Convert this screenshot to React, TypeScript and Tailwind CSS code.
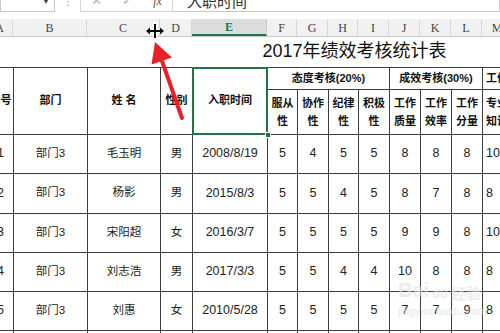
import React from 'react';

const letters = [
  { l: 'A', w: 'w-[26px]' },
  { l: 'B', w: 'w-[74px]' },
  { l: 'C', w: 'w-[73px]' },
  { l: 'D', w: 'w-[32px]' },
  { l: 'E', w: 'w-[75px]' },
  { l: 'F', w: 'w-[30px]' },
  { l: 'G', w: 'w-[31px]' },
  { l: 'H', w: 'w-[30px]' },
  { l: 'I', w: 'w-[31px]' },
  { l: 'J', w: 'w-[31px]' },
  { l: 'K', w: 'w-[31px]' },
  { l: 'L', w: 'w-[31px]' },
  { l: 'M', w: 'w-[31px]' },
];

const rows = [
  ['1', '部门3', '毛玉明', '男', '2008/8/19', '5', '4', '5', '5', '8', '8', '8', '10'],
  ['2', '部门3', '杨影', '男', '2015/8/3', '5', '5', '4', '5', '8', '7', '8', '8'],
  ['3', '部门3', '宋阳超', '女', '2016/3/7', '5', '5', '5', '5', '9', '9', '8', '10'],
  ['4', '部门3', '刘志浩', '男', '2017/3/3', '5', '5', '4', '4', '10', '8', '8', '8'],
  ['5', '部门3', '刘惠', '女', '2010/5/28', '5', '5', '5', '5', '7', '7', '9', '8'],
];

const subHeads: [string, string][] = [
  ['服从', '性'],
  ['协作', '性'],
  ['纪律', '性'],
  ['积极', '性'],
  ['工作', '质量'],
  ['工作', '效率'],
  ['工作', '分量'],
  ['专业', '知识'],
];

const cell = 'border border-[#3c3c3c] text-center align-middle p-0 overflow-hidden whitespace-nowrap';
const head = cell + ' font-bold text-[11px] text-[#111]';

function TopBar() {
  return (
    <div className="h-[12px] overflow-hidden">
      <div className="flex -mt-[10px] h-[22px] items-stretch">
        <div className="w-[55px] border border-[#c8c8c8] relative flex items-center justify-end pr-[4px]">
          <span className="text-[8px] text-[#444] leading-none">▼</span>
        </div>
        <div className="w-[25px] flex items-center justify-center text-[10px] text-[#888]">⋮</div>
        <div className="w-[93px] border border-[#d4d4d4] flex items-center justify-around text-[#b5b5b5] text-[13px]">
          <span>✕</span>
          <span>✓</span>
          <span className="italic font-['Liberation_Serif',serif] text-[12px] text-[#555]">fx</span>
        </div>
        <div className="flex-1 border border-[#c8c8c8] border-l-0 pl-[14px] flex items-center text-[15px] text-[#333] font-['Noto_Sans_CJK_SC',sans-serif]">
          入职时间
        </div>
      </div>
    </div>
  );
}

function LetterRow() {
  return (
    <div className="flex -ml-[13px] h-[18px] bg-[#f1f1f1] border-b border-[#c9c9c9] font-['Liberation_Serif',serif] text-[12px] text-[#444]">
      {letters.map((c) =>
        c.l === 'E' ? (
          <div
            key={c.l}
            className={`${c.w} shrink-0 bg-[#dcdcdc] border-r border-[#c9c9c9] border-b-2 border-b-[#217346] text-center leading-[17px] font-bold text-[#217346]`}
          >
            {c.l}
          </div>
        ) : (
          <div key={c.l} className={`${c.w} shrink-0 border-r border-[#d8d8d8] text-center leading-[18px]`}>
            {c.l}
          </div>
        )
      )}
    </div>
  );
}

function Sheet() {
  return (
    <table className="table-fixed border-collapse -ml-[13px] w-[526px] font-['Liberation_Sans','Noto_Sans_CJK_SC',sans-serif] text-[#222]">
      <colgroup>
        {letters.map((c) => (
          <col key={c.l} className={c.w} />
        ))}
      </colgroup>
      <tbody>
        <tr className="h-[30px]">
          <td colSpan={13} className="p-0 pl-[275px] text-[18px] text-[#111] whitespace-nowrap align-middle">
            2017年绩效考核统计表
          </td>
        </tr>
        <tr className="h-[22px]">
          <td rowSpan={2} className={head}>序号</td>
          <td rowSpan={2} className={head}>部门</td>
          <td rowSpan={2} className={head}>姓 名</td>
          <td rowSpan={2} className={head}>性别</td>
          <td rowSpan={2} className={head + ' relative overflow-visible'}>
            入职时间
            <div className="absolute -inset-px border-2 border-[#217346] pointer-events-none" />
            <div className="absolute -bottom-[4px] -right-[4px] w-[6px] h-[6px] bg-[#217346] border border-white" />
          </td>
          <td colSpan={4} className={head}>态度考核(20%)</td>
          <td colSpan={3} className={head}>成效考核(30%)</td>
          <td className={head + ' text-left pl-[3px] overflow-visible'}>工作能力(50%)</td>
        </tr>
        <tr className="h-[45px]">
          {subHeads.map(([a, b], i) => (
            <td key={i} className={head + ' leading-[18px] ' + (i === 7 ? 'text-left pl-[3px] overflow-visible' : '')}>
              {a}
              <br />
              {b}
            </td>
          ))}
        </tr>
        {rows.map((r, ri) => (
          <tr key={ri} className={ri === 1 ? 'h-[40px]' : 'h-[39px]'}>
            {r.map((v, ci) => (
              <td
                key={ci}
                className={
                  cell +
                  (ci === 1 || ci === 2 || ci === 3 ? ' text-[11.5px]' : ' text-[12.5px]') +
                  (ci === 12 ? ' text-left pl-[3px]' : '')
                }
              >
                {v}
              </td>
            ))}
          </tr>
        ))}
        <tr className="h-[20px]">
          {letters.map((c) => (
            <td key={c.l} className={cell} />
          ))}
        </tr>
      </tbody>
    </table>
  );
}

function Overlay() {
  return (
    <>
      {/* resize cursor */}
      <svg className="absolute left-0 top-0 pointer-events-none" width="500" height="333">
        <g stroke="#fff" strokeWidth="4" strokeLinecap="square">
          <line x1="155" y1="24" x2="155" y2="38" />
          <line x1="148" y1="31" x2="162" y2="31" />
        </g>
        <line x1="155" y1="24" x2="155" y2="38" stroke="#000" strokeWidth="2" />
        <line x1="149" y1="31" x2="161" y2="31" stroke="#000" strokeWidth="2" />
        <polygon points="146,31 150,27.5 150,34.5" fill="#000" />
        <polygon points="164,31 160,27.5 160,34.5" fill="#000" />
        {/* red arrow */}
        <line x1="182" y1="118" x2="162" y2="61" stroke="#e8202a" strokeWidth="4" strokeLinecap="round" />
        <polygon points="155,42 151.5,64.5 172,57.5" fill="#e8202a" />
      </svg>
      {/* watermark */}
      <div className="absolute left-[398px] top-[280px] pointer-events-none flex flex-col items-start opacity-60">
        <div className="flex items-end gap-[3px] text-[20px] font-bold text-[#e2e2e2] leading-none font-['Liberation_Sans',sans-serif]">
          <span>Bai</span>
          <span className="text-[13px]">du</span>
          <span className="text-[15px] font-['Noto_Sans_CJK_SC',sans-serif]">经验</span>
        </div>
        <div className="text-[11px] text-[#dadada] leading-none mt-[6px] font-['Liberation_Sans',sans-serif]">
          jingyan.baidu.com
        </div>
      </div>
    </>
  );
}

export default function App() {
  return (
    <div className="relative w-[500px] h-[333px] overflow-hidden bg-white">
      <TopBar />
      <div className="h-[7px]" />
      <LetterRow />
      <Sheet />
      <Overlay />
    </div>
  );
}
